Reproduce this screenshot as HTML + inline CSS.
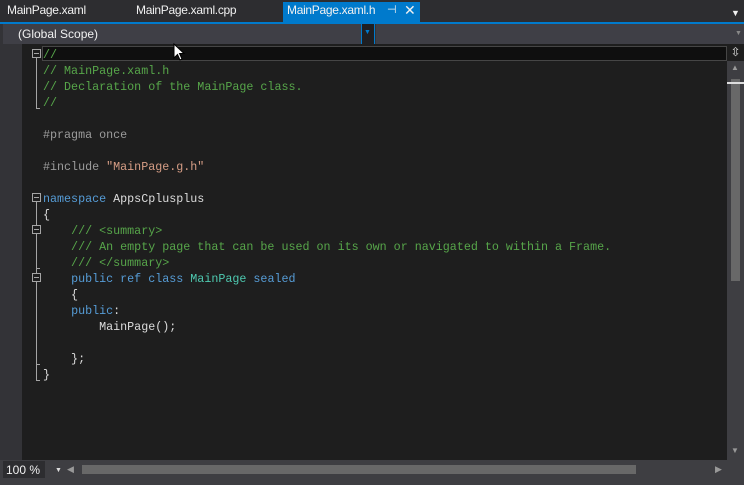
<!DOCTYPE html>
<html><head><style>
*{margin:0;padding:0;box-sizing:border-box}
body{width:744px;height:485px;background:#2d2d30;position:relative;overflow:hidden;font-family:"Liberation Sans",sans-serif}
.a{position:absolute}
.tab{position:absolute;top:3px;font-size:12px;color:#f1f1f1;letter-spacing:-0.3px}
.code{position:absolute;left:43px;top:47px;font-family:"Liberation Mono",monospace;font-size:11.7px;line-height:16px;color:#dcdcdc;white-space:pre}
.c{color:#57a64a}.k{color:#569cd6}.t{color:#4ec9b0}.s{color:#d69d85}.g{color:#9b9b9b}
.fb{position:absolute;width:9px;height:9px;border:1px solid #a5a5a5;left:32px;background:#1e1e1e}
.fb:after{content:"";position:absolute;left:1px;top:3px;width:5px;height:1px;background:#a5a5a5}
.vl{position:absolute;width:1px;background:#a5a5a5;left:36px}
.hl{position:absolute;height:1px;width:4px;background:#a5a5a5;left:36px}
</style></head><body>
<div class="a" style="left:283px;top:2px;width:137px;height:21px;background:#007acc"></div>
<div class="tab" style="left:7px">MainPage.xaml</div>
<div class="tab" style="left:136px">MainPage.xaml.cpp</div>
<div class="tab" style="left:287px">MainPage.xaml.h</div>
<div class="tab" style="left:387px;font-size:11px">⊣</div>
<div class="tab" style="left:404px;top:2px;font-size:14px">✕</div>
<div class="tab" style="left:731px;font-size:9px;top:8px">▼</div>
<div class="a" style="left:0;top:22px;width:744px;height:2px;background:#007acc"></div>
<div class="a" style="left:0;top:24px;width:744px;height:20px;background:#333337"></div>
<div class="a" style="left:3px;top:24px;width:358px;height:20px;background:#3f3f46"></div>
<div class="a" style="left:361px;top:24px;width:14px;height:20px;background:#1f1f22;border-left:1px solid #007acc;border-right:1px solid #007acc"></div>
<div class="a" style="left:364px;top:29px;font-size:7px;color:#007acc">▼</div>
<div class="a" style="left:376px;top:24px;width:368px;height:20px;background:#3f3f46"></div>
<div class="a" style="left:735px;top:30px;font-size:7px;color:#888">▼</div>
<div class="a" style="left:18px;top:27px;font-size:12px;color:#f1f1f1">(Global Scope)</div>
<div class="a" style="left:0;top:44px;width:22px;height:416px;background:#333337"></div>
<div class="a" style="left:22px;top:44px;width:705px;height:416px;background:#1e1e1e"></div>
<div class="a" style="left:42px;top:46px;width:685px;height:15px;background:#0f0f0f;border:1px solid #464646"></div>
<div class="a" style="left:727px;top:44px;width:17px;height:416px;background:#3e3e42"></div>
<div class="a" style="left:727px;top:44px;width:17px;height:17px;background:#1e1e1e;color:#ddd;font-size:12px;text-align:center;line-height:17px">⇳</div>
<div class="a" style="left:731px;top:63px;font-size:8px;color:#999">▲</div>
<div class="a" style="left:731px;top:79px;width:9px;height:202px;background:#686868"></div>
<div class="a" style="left:727px;top:82px;width:17px;height:2px;background:#ddd"></div>
<div class="a" style="left:731px;top:446px;font-size:8px;color:#999">▼</div>
<div class="a" style="left:0;top:460px;width:744px;height:25px;background:#3e3e42"></div>
<div class="a" style="left:3px;top:461px;width:42px;height:17px;background:#2d2d30"></div>
<div class="a" style="left:6px;top:463px;font-size:12px;color:#f1f1f1">100 %</div>
<div class="a" style="left:55px;top:467px;font-size:7px;color:#ddd">▼</div>
<div class="a" style="left:67px;top:464px;font-size:9px;color:#999">◀</div>
<div class="a" style="left:82px;top:465px;width:554px;height:9px;background:#686868"></div>
<div class="a" style="left:715px;top:464px;font-size:9px;color:#999">▶</div>

<div class="vl" style="top:58px;height:50px"></div><div class="hl" style="top:108px"></div>
<div class="fb" style="top:49px"></div>
<div class="vl" style="top:202px;height:178px"></div><div class="hl" style="top:380px"></div>
<div class="hl" style="top:268px"></div>
<div class="hl" style="top:364px"></div>
<div class="fb" style="top:193px"></div>
<div class="fb" style="top:225px"></div>
<div class="fb" style="top:273px"></div>

<div class="code"><span class="c">//
// MainPage.xaml.h
// Declaration of the MainPage class.
//</span>

<span class="g">#pragma once</span>

<span class="g">#include</span> <span class="s">"MainPage.g.h"</span>

<span class="k">namespace</span> AppsCplusplus
{
    <span class="c">/// &lt;summary&gt;
    /// An empty page that can be used on its own or navigated to within a Frame.
    /// &lt;/summary&gt;</span>
    <span class="k">public ref class</span> <span class="t">MainPage</span> <span class="k">sealed</span>
    {
    <span class="k">public</span>:
        MainPage();

    };
}</div>
<svg class="a" style="left:173px;top:43px" width="14" height="20"><path d="M1 1 L1 15 L4.5 11.5 L7 17 L9 16 L6.5 10.5 L11 10.5 Z" fill="#fff" stroke="#000" stroke-width="1"/></svg>
</body></html>
